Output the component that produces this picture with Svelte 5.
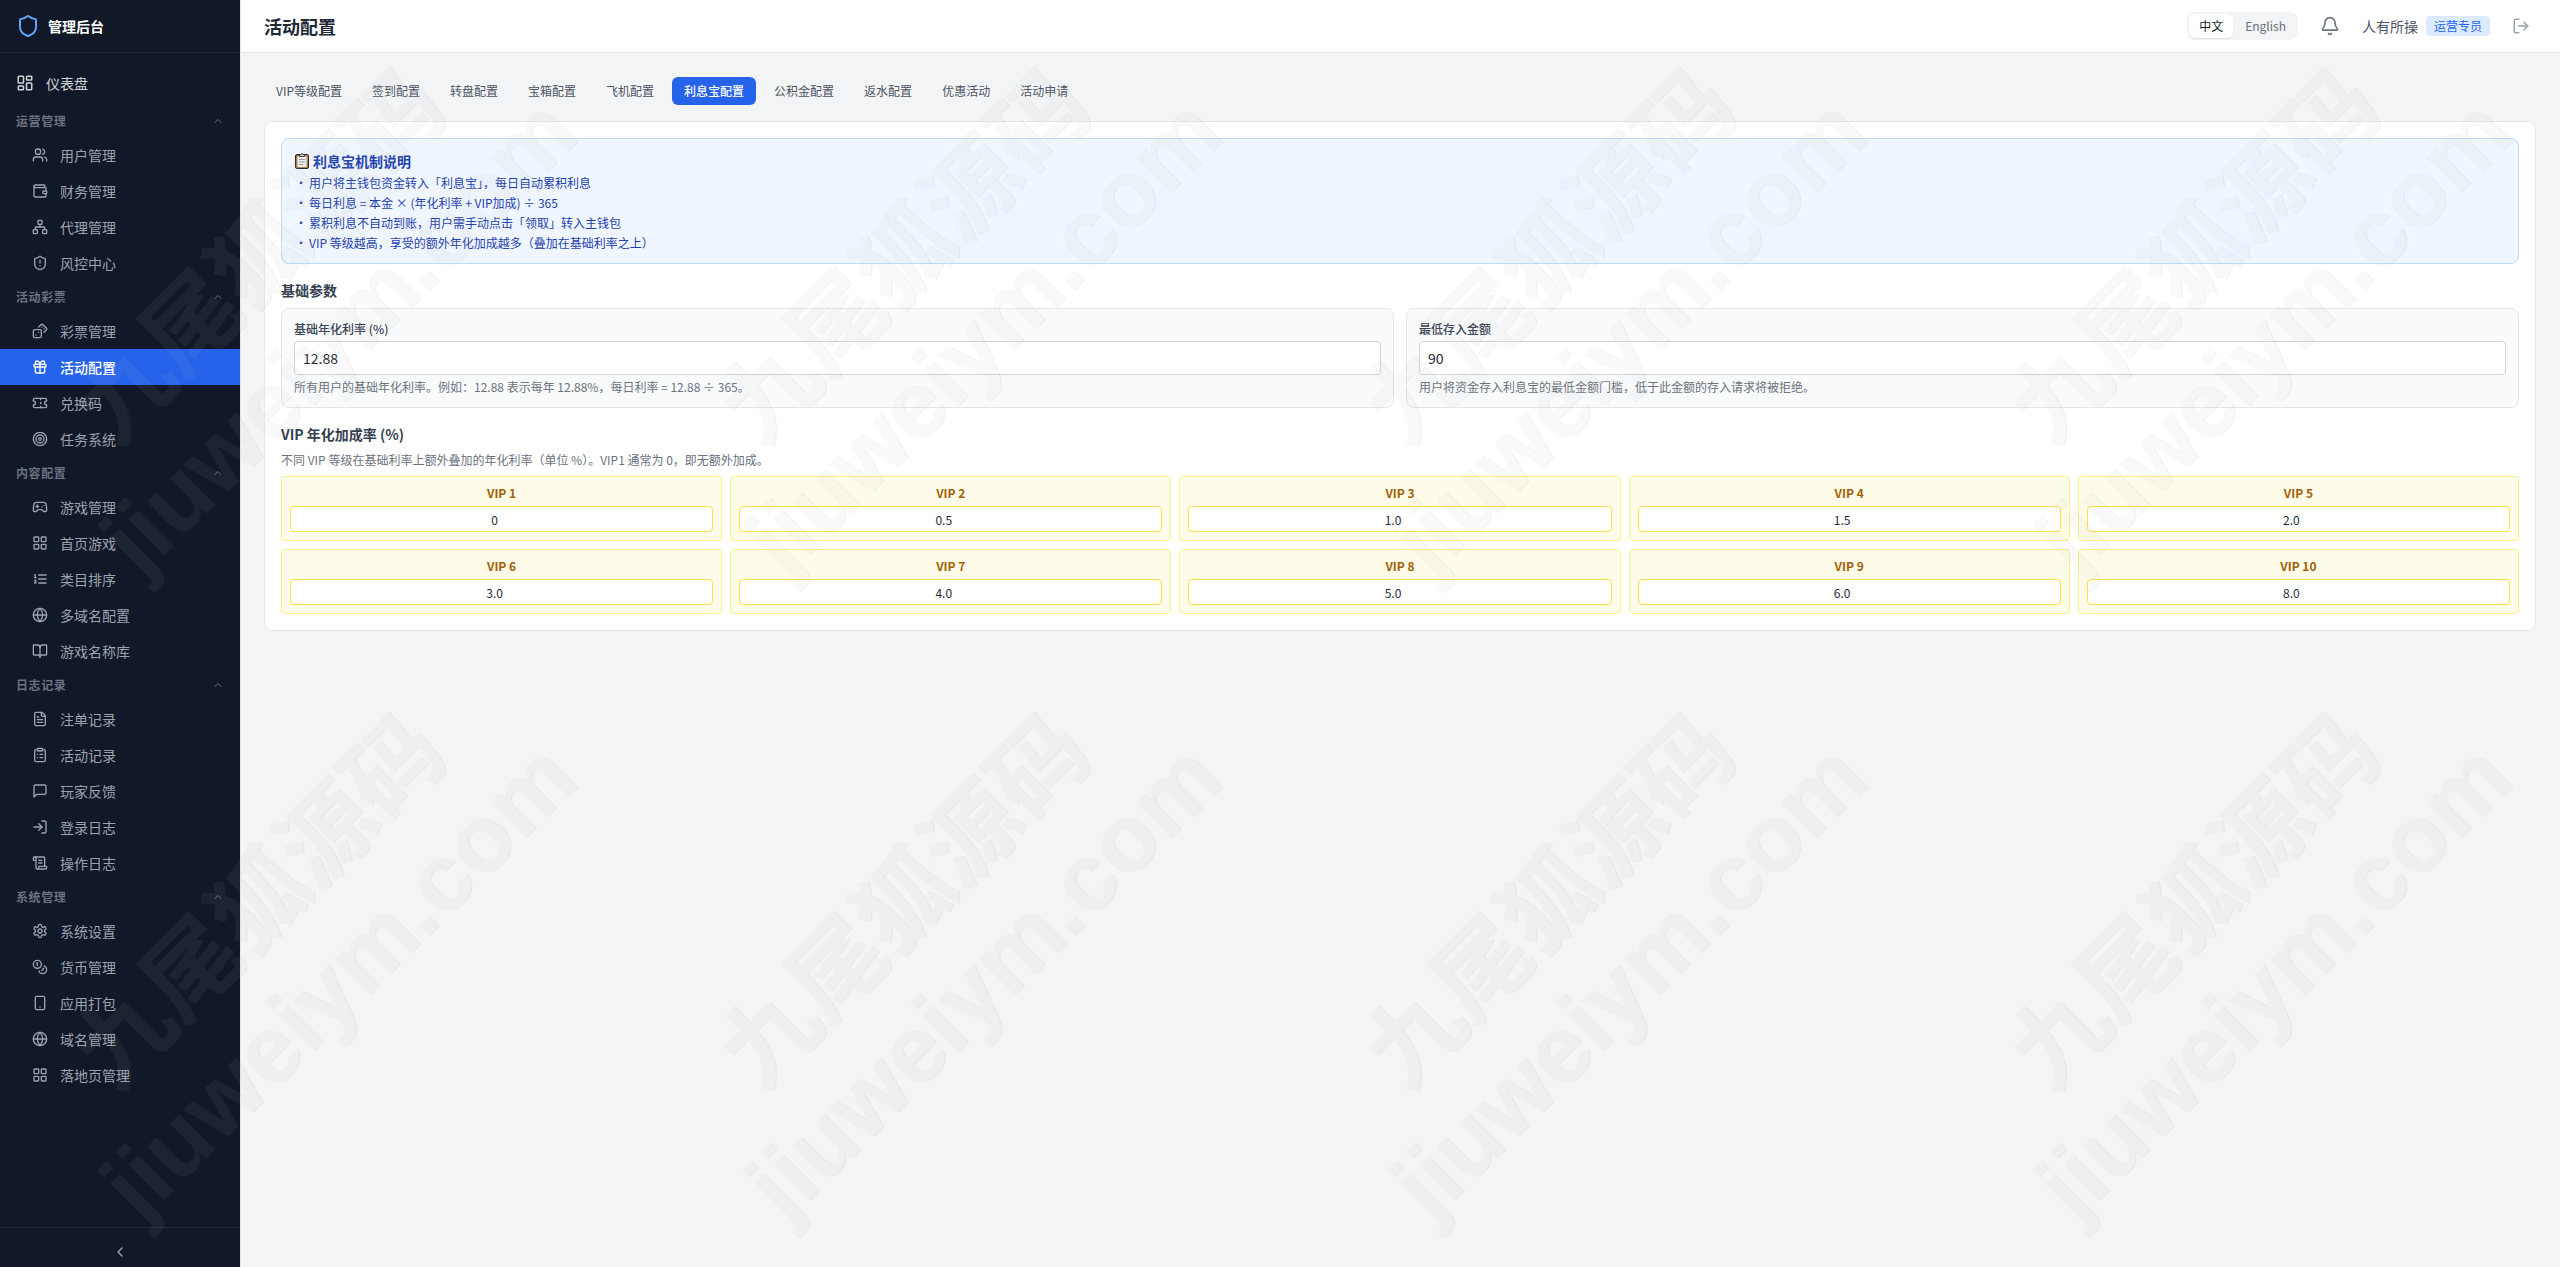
<script>
  const icons = {
    shield: '<path d="M20 13c0 5-3.5 7.5-7.66 8.95a1 1 0 0 1-.67-.01C7.5 20.5 4 18 4 13V6a1 1 0 0 1 1-1c2 0 4.5-1.2 6.24-2.72a1.17 1.17 0 0 1 1.52 0C14.51 3.81 17 5 19 5a1 1 0 0 1 1 1z"/>',
    dashboard: '<rect width="7" height="9" x="3" y="3" rx="1"/><rect width="7" height="5" x="14" y="3" rx="1"/><rect width="7" height="9" x="14" y="12" rx="1"/><rect width="7" height="5" x="3" y="16" rx="1"/>',
    users: '<path d="M16 21v-2a4 4 0 0 0-4-4H6a4 4 0 0 0-4 4v2"/><path d="M16 3.128a4 4 0 0 1 0 7.744"/><path d="M22 21v-2a4 4 0 0 0-3-3.87"/><circle cx="9" cy="7" r="4"/>',
    wallet: '<path d="M19 7V4a1 1 0 0 0-1-1H5a2 2 0 0 0 0 4h15a1 1 0 0 1 1 1v4h-3a2 2 0 0 0 0 4h3a1 1 0 0 0 1-1v-2a1 1 0 0 0-1-1"/><path d="M3 5v14a2 2 0 0 0 2 2h15a1 1 0 0 0 1-1v-4"/>',
    network: '<rect x="16" y="16" width="6" height="6" rx="1"/><rect x="2" y="16" width="6" height="6" rx="1"/><rect x="9" y="2" width="6" height="6" rx="1"/><path d="M5 16v-3a1 1 0 0 1 1-1h12a1 1 0 0 1 1 1v3"/><path d="M12 12V8"/>',
    shieldAlert: '<path d="M20 13c0 5-3.5 7.5-7.66 8.95a1 1 0 0 1-.67-.01C7.5 20.5 4 18 4 13V6a1 1 0 0 1 1-1c2 0 4.5-1.2 6.24-2.72a1.17 1.17 0 0 1 1.52 0C14.51 3.81 17 5 19 5a1 1 0 0 1 1 1z"/><path d="M12 8v4"/><path d="M12 16h.01"/>',
    dices: '<rect width="12" height="12" x="2" y="10" rx="2" ry="2"/><path d="m17.92 14 3.5-3.5a2.24 2.24 0 0 0 0-3l-5-4.92a2.24 2.24 0 0 0-3 0L10 6"/><path d="M6 18h.01"/><path d="M10 14h.01"/><path d="M15 6h.01"/><path d="M18 9h.01"/>',
    gift: '<rect x="3" y="8" width="18" height="4" rx="1"/><path d="M12 8v13"/><path d="M19 12v7a2 2 0 0 1-2 2H7a2 2 0 0 1-2-2v-7"/><path d="M7.5 8a2.5 2.5 0 0 1 0-5A4.8 8 0 0 1 12 8a4.8 8 0 0 1 4.5-5 2.5 2.5 0 0 1 0 5"/>',
    ticket: '<path d="M2 9a3 3 0 0 1 0 6v2a2 2 0 0 0 2 2h16a2 2 0 0 0 2-2v-2a3 3 0 0 1 0-6V7a2 2 0 0 0-2-2H4a2 2 0 0 0-2 2Z"/><path d="M13 5v2"/><path d="M13 17v2"/><path d="M13 11v2"/>',
    target: '<circle cx="12" cy="12" r="10"/><circle cx="12" cy="12" r="6"/><circle cx="12" cy="12" r="2"/>',
    gamepad: '<path d="M6 11h4"/><path d="M8 9v4"/><path d="M15 12h.01"/><path d="M18 10h.01"/><path d="M17.32 5H6.68a4 4 0 0 0-3.978 3.59c-.006.052-.01.101-.017.152C2.604 9.416 2 14.456 2 16a3 3 0 0 0 3 3c1 0 1.5-.5 2-1l1.414-1.414A2 2 0 0 1 9.828 16h4.344a2 2 0 0 1 1.414.586L17 18c.5.5 1 1 2 1a3 3 0 0 0 3-3c0-1.545-.604-6.584-.685-7.258-.007-.05-.011-.1-.017-.151A4 4 0 0 0 17.32 5z"/>',
    grid: '<rect width="7" height="7" x="3" y="3" rx="1"/><rect width="7" height="7" x="14" y="3" rx="1"/><rect width="7" height="7" x="14" y="14" rx="1"/><rect width="7" height="7" x="3" y="14" rx="1"/>',
    list: '<path d="M10 12h11"/><path d="M10 18h11"/><path d="M10 6h11"/><path d="M4 10h2"/><path d="M4 6h1v4"/><path d="M6 18H4c0-1 2-2 2-3s-1-1.5-2-1"/>',
    globe: '<circle cx="12" cy="12" r="10"/><path d="M12 2a14.5 14.5 0 0 0 0 20 14.5 14.5 0 0 0 0-20"/><path d="M2 12h20"/>',
    book: '<path d="M12 7v14"/><path d="M3 18a1 1 0 0 1-1-1V4a1 1 0 0 1 1-1h5a4 4 0 0 1 4 4 4 4 0 0 1 4-4h5a1 1 0 0 1 1 1v13a1 1 0 0 1-1 1h-6a3 3 0 0 0-3 3 3 3 0 0 0-3-3z"/>',
    file: '<path d="M15 2H6a2 2 0 0 0-2 2v16a2 2 0 0 0 2 2h12a2 2 0 0 0 2-2V7Z"/><path d="M14 2v4a2 2 0 0 0 2 2h4"/><path d="M10 9H8"/><path d="M16 13H8"/><path d="M16 17H8"/>',
    clipboard: '<rect width="8" height="4" x="8" y="2" rx="1" ry="1"/><path d="M16 4h2a2 2 0 0 1 2 2v14a2 2 0 0 1-2 2H6a2 2 0 0 1-2-2V6a2 2 0 0 1 2-2h2"/><path d="M12 11h4"/><path d="M12 16h4"/><path d="M8 11h.01"/><path d="M8 16h.01"/>',
    message: '<path d="M21 15a2 2 0 0 1-2 2H7l-4 4V5a2 2 0 0 1 2-2h14a2 2 0 0 1 2 2z"/>',
    login: '<path d="M15 3h4a2 2 0 0 1 2 2v14a2 2 0 0 1-2 2h-4"/><path d="m10 17 5-5-5-5"/><path d="M15 12H3"/>',
    scroll: '<path d="M15 12h-5"/><path d="M15 8h-5"/><path d="M19 17V5a2 2 0 0 0-2-2H4"/><path d="M8 21h12a2 2 0 0 0 2-2v-1a1 1 0 0 0-1-1H11a1 1 0 0 0-1 1v1a2 2 0 1 1-4 0V5a2 2 0 1 0-4 0v2a1 1 0 0 0 1 1h3"/>',
    settings: '<path d="M12.22 2h-.44a2 2 0 0 0-2 2v.18a2 2 0 0 1-1 1.73l-.43.25a2 2 0 0 1-2 0l-.15-.08a2 2 0 0 0-2.73.73l-.22.38a2 2 0 0 0 .73 2.73l.15.1a2 2 0 0 1 1 1.72v.51a2 2 0 0 1-1 1.74l-.15.09a2 2 0 0 0-.73 2.73l.22.38a2 2 0 0 0 2.73.73l.15-.08a2 2 0 0 1 2 0l.43.25a2 2 0 0 1 1 1.73V20a2 2 0 0 0 2 2h.44a2 2 0 0 0 2-2v-.18a2 2 0 0 1 1-1.73l.43-.25a2 2 0 0 1 2 0l.15.08a2 2 0 0 0 2.73-.73l.22-.39a2 2 0 0 0-.73-2.73l-.15-.08a2 2 0 0 1-1-1.74v-.5a2 2 0 0 1 1-1.74l.15-.09a2 2 0 0 0 .73-2.73l-.22-.38a2 2 0 0 0-2.73-.73l-.15.08a2 2 0 0 1-2 0l-.43-.25a2 2 0 0 1-1-1.73V4a2 2 0 0 0-2-2z"/><circle cx="12" cy="12" r="3"/>',
    coins: '<circle cx="8" cy="8" r="6"/><path d="M18.09 10.37A6 6 0 1 1 10.34 18"/><path d="M7 6h1v4"/><path d="m16.71 13.88.7.71-2.82 2.82"/>',
    phone: '<rect width="14" height="20" x="5" y="2" rx="2" ry="2"/><path d="M12 18h.01"/>',
    up: '<path d="m18 15-6-6-6 6"/>',
    left: '<path d="m15 18-6-6 6-6"/>',
    bell: '<path d="M10.268 21a2 2 0 0 0 3.464 0"/><path d="M3.262 15.326A1 1 0 0 0 4 17h16a1 1 0 0 0 .74-1.673C19.41 13.956 18 12.499 18 8A6 6 0 0 0 6 8c0 4.499-1.411 5.956-2.738 7.326"/>',
    logout: '<path d="M9 21H5a2 2 0 0 1-2-2V5a2 2 0 0 1 2-2h4"/><path d="m16 17 5-5-5-5"/><path d="M21 12H9"/>'
  };

  const groups = [
    { title: '运营管理', items: [['users', '用户管理'], ['wallet', '财务管理'], ['network', '代理管理'], ['shieldAlert', '风控中心']] },
    { title: '活动彩票', items: [['dices', '彩票管理'], ['gift', '活动配置'], ['ticket', '兑换码'], ['target', '任务系统']] },
    { title: '内容配置', items: [['gamepad', '游戏管理'], ['grid', '首页游戏'], ['list', '类目排序'], ['globe', '多域名配置'], ['book', '游戏名称库']] },
    { title: '日志记录', items: [['file', '注单记录'], ['clipboard', '活动记录'], ['message', '玩家反馈'], ['login', '登录日志'], ['scroll', '操作日志']] },
    { title: '系统管理', items: [['settings', '系统设置'], ['coins', '货币管理'], ['phone', '应用打包'], ['globe', '域名管理'], ['grid', '落地页管理']] }
  ];
  let page = $state('活动配置');
  let lang = $state('中文');

  const tabs = ['VIP等级配置', '签到配置', '转盘配置', '宝箱配置', '飞机配置', '利息宝配置', '公积金配置', '返水配置', '优惠活动', '活动申请'];
  let tab = $state('利息宝配置');

  const rules = [
    '用户将主钱包资金转入「利息宝」，每日自动累积利息',
    '每日利息 = 本金 × (年化利率 + VIP加成) ÷ 365',
    '累积利息不自动到账，用户需手动点击「领取」转入主钱包',
    'VIP 等级越高，享受的额外年化加成越多（叠加在基础利率之上）'
  ];

  let fields = $state([
    { id: 'rate', label: '基础年化利率 (%)', value: '12.88', help: '所有用户的基础年化利率。例如：12.88 表示每年 12.88%，每日利率 = 12.88 ÷ 365。' },
    { id: 'min', label: '最低存入金额', value: '90', help: '用户将资金存入利息宝的最低金额门槛，低于此金额的存入请求将被拒绝。' }
  ]);
  let vip = $state(['0', '0.5', '1.0', '1.5', '2.0', '3.0', '4.0', '5.0', '6.0', '8.0']);

  // The watermark repeats on a square grid.
  const tile = 645;
  const marks = [0, 1].flatMap((r) => [0, 1, 2, 3].map((c) => `translate(${c * tile + 55} ${r * tile + 55}) rotate(-45)`));
</script>

{#snippet icon(name, cls)}
  <svg class="icon {cls}" viewBox="0 0 24 24" aria-hidden="true">{@html icons[name]}</svg>
{/snippet}

<div class="app">
  <aside>
    <div class="brand">{@render icon('shield', 'i24')}<span>管理后台</span></div>
    <nav>
      <a class="top" href="#dashboard">{@render icon('dashboard', 'i18')}<span>仪表盘</span></a>
      {#each groups as g}
        <button class="group" type="button"><span>{g.title}</span>{@render icon('up', 'i12')}</button>
        {#each g.items as [ic, name]}
          <a class="item" class:active={page === name} href="#{name}" onclick={() => (page = name)}>
            {@render icon(ic, 'i16')}<span>{name}</span>
          </a>
        {/each}
      {/each}
    </nav>
    <button class="collapse" type="button" aria-label="收起菜单">{@render icon('left', 'i16')}</button>
  </aside>

  <div class="body">
    <header>
      <h1>活动配置</h1>
      <div class="tools">
        <div class="lang">
          {#each ['中文', 'English'] as l}
            <button type="button" class:on={lang === l} onclick={() => (lang = l)}>{l}</button>
          {/each}
        </div>
        <button class="bell" type="button" aria-label="通知">{@render icon('bell', 'i20')}</button>
        <div class="user"><span>人有所操</span><span class="role">运营专员</span></div>
        <button class="out" type="button" aria-label="退出">{@render icon('logout', 'i18')}</button>
      </div>
    </header>

    <main>
      <div class="tabs">
        {#each tabs as t}
          <button type="button" class:on={tab === t} onclick={() => (tab = t)}>{t}</button>
        {/each}
      </div>

      <section class="card">
        <div class="notice">
          <h2>
            <svg class="board" viewBox="0 0 14 16" aria-hidden="true">
              <rect x="0.5" y="1.5" width="13" height="14" rx="1.5" fill="#a87c4f" stroke="#2b2622" />
              <path d="M2.5 3.5h9v10.5h-9z" fill="#f4f4f4" />
              <path d="M4.5 3.5v-2h1.5a1 1 0 0 1 2 0h1.5v2z" fill="#c8c8c8" stroke="#2b2622" stroke-width="0.8" />
              <path d="M4 6.5h6M4 9h6M4 11.5h4" stroke="#999" />
            </svg>
            <span>利息宝机制说明</span>
          </h2>
          <ul>
            {#each rules as r}<li>{r}</li>{/each}
          </ul>
        </div>

        <h3>基础参数</h3>
        <div class="fields">
          {#each fields as f}
            <div class="field">
              <label for={f.id}>{f.label}</label>
              <input id={f.id} type="text" bind:value={f.value} />
              <p>{f.help}</p>
            </div>
          {/each}
        </div>

        <h3>VIP 年化加成率 (%)</h3>
        <p class="hint">不同 VIP 等级在基础利率上额外叠加的年化利率（单位 %）。VIP1 通常为 0，即无额外加成。</p>
        <div class="vips">
          {#each vip as _, i}
            <div class="vip">
              <label for="vip{i}">VIP {i + 1}</label>
              <input id="vip{i}" type="text" bind:value={vip[i]} />
            </div>
          {/each}
        </div>
      </section>
    </main>
  </div>

  <svg class="watermark" aria-hidden="true">
    {#each marks as t}
      <g transform={t}>
        <text class="cn" x="2" y="320">九尾狐源码</text>
        <text x="2" y="431">jiuweiym.com</text>
      </g>
    {/each}
  </svg>
</div>

<style>
  :global(body) {
    background: #f3f4f6;
  }
  .app {
    position: relative;
    display: flex;
    min-height: 100vh;
    overflow: hidden;
    font-family: 'Noto Sans CJK SC', sans-serif;
    font-size: 14px;
    line-height: 20px;
    color: #1f2937;
  }
  .app :global(*) {
    box-sizing: border-box;
  }
  h1, h2, h3, p, ul {
    margin: 0;
    padding: 0;
  }
  button, input {
    font: inherit;
    color: inherit;
  }
  button {
    border: 0;
    padding: 0;
    background: none;
    cursor: pointer;
  }
  a {
    color: inherit;
    text-decoration: none;
  }
  .icon {
    flex: none;
    display: block;
    fill: none;
    stroke: currentColor;
    stroke-width: 2;
    stroke-linecap: round;
    stroke-linejoin: round;
  }
  .i12 { width: 12px; height: 12px; }
  .i16 { width: 16px; height: 16px; }
  .i18 { width: 18px; height: 18px; }
  .i20 { width: 20px; height: 20px; }
  .i24 { width: 24px; height: 24px; }

  aside {
    flex: none;
    display: flex;
    flex-direction: column;
    width: 240px;
    background: #111827;
    color: #9ca3af;
  }
  .brand {
    display: flex;
    align-items: center;
    gap: 8px;
    height: 53px;
    padding: 0 16px;
    border-bottom: 1px solid #1f2937;
    color: #fff;
    font-weight: 700;
  }
  .brand .icon {
    color: #60a5fa;
  }
  nav {
    flex: 1;
    padding: 12px 0;
  }
  .top {
    display: flex;
    align-items: center;
    gap: 12px;
    height: 36px;
    margin-bottom: 4px;
    padding: 0 16px;
    color: #d1d5db;
  }
  .group {
    display: flex;
    align-items: center;
    justify-content: space-between;
    width: 100%;
    height: 32px;
    padding: 4px 16px;
    color: #6b7280;
    font-size: 12px;
    font-weight: 600;
    letter-spacing: 0.05em;
  }
  .item {
    display: flex;
    align-items: center;
    gap: 12px;
    height: 36px;
    padding: 0 32px;
  }
  .item.active {
    background: #2563eb;
    color: #fff;
    font-weight: 500;
  }
  .collapse {
    display: flex;
    align-items: center;
    justify-content: center;
    height: 40px;
    padding-top: 8px;
    border-top: 1px solid #1f2937;
  }

  .body {
    flex: 1;
    min-width: 0;
    border-left: 1px solid #e5e7eb;
  }
  header {
    display: flex;
    align-items: center;
    justify-content: space-between;
    height: 53px;
    padding: 0 30px 0 23px;
    background: #fff;
    border-bottom: 1px solid #e5e7eb;
  }
  h1 {
    font-size: 18px;
    line-height: 28px;
    font-weight: 600;
  }
  .tools {
    display: flex;
    align-items: center;
    gap: 22px;
  }
  .lang {
    display: flex;
    gap: 2px;
    padding: 2px;
    border-radius: 8px;
    background: #f3f4f6;
    font-size: 12px;
    line-height: 16px;
    color: #6b7280;
  }
  .lang button {
    padding: 4px 10px;
    border-radius: 6px;
  }
  .lang .on {
    background: #fff;
    color: #111827;
    box-shadow: 0 1px 2px rgba(0, 0, 0, 0.08);
  }
  .bell { color: #6b7280; }
  .out { color: #9ca3af; }
  .user {
    display: flex;
    align-items: center;
    gap: 8px;
    color: #4b5563;
  }
  .role {
    padding: 2px 8px;
    border-radius: 4px;
    background: #dbeafe;
    color: #2563eb;
    font-size: 12px;
    line-height: 16px;
  }

  main {
    padding: 24px 24px 24px 23px;
  }
  .tabs {
    display: flex;
    gap: 6px;
    margin-bottom: 16px;
    color: #4b5563;
    font-size: 12px;
    line-height: 16px;
  }
  .tabs button {
    padding: 6px 12px;
    border-radius: 6px;
  }
  .tabs .on {
    background: #2563eb;
    color: #fff;
    font-weight: 500;
  }
  .card {
    padding: 16px;
    border: 1px solid #e5e7eb;
    border-radius: 8px;
    background: #fff;
  }
  .notice {
    margin-bottom: 16px;
    padding: 12px 12px 10px;
    border: 1px solid #bfdbfe;
    border-radius: 8px;
    background: #eff6ff;
    color: #1e40af;
  }
  h2 {
    display: flex;
    align-items: center;
    gap: 4px;
    margin-bottom: 2px;
    padding-left: 1px;
    font-size: 14px;
    line-height: 20px;
    font-weight: 700;
  }
  .board {
    width: 14px;
    height: 16px;
  }
  ul {
    list-style: none;
    font-size: 12px;
    line-height: 20px;
  }
  li::before {
    content: '•';
    display: inline-block;
    width: 14px;
    padding-left: 1px;
  }
  h3 {
    margin-bottom: 8px;
    color: #374151;
    font-size: 14px;
    line-height: 20px;
    font-weight: 700;
  }
  .fields {
    display: grid;
    grid-template-columns: 1fr 1fr;
    gap: 12px;
    margin-bottom: 16px;
  }
  .field {
    display: flex;
    flex-direction: column;
    gap: 4px;
    padding: 12px;
    border: 1px solid #e5e7eb;
    border-radius: 8px;
    background: #f9fafb;
    font-size: 12px;
    line-height: 16px;
  }
  .field label {
    color: #374151;
    font-weight: 500;
  }
  .field input {
    width: 100%;
    height: 34px;
    padding: 0 8px;
    border: 1px solid #d1d5db;
    border-radius: 4px;
    background: #fff;
    color: #1f2937;
    font-size: 14px;
  }
  .field p, .hint {
    color: #6b7280;
    font-size: 12px;
    line-height: 16px;
  }
  .hint {
    margin-bottom: 8px;
  }
  .vips {
    display: grid;
    grid-template-columns: repeat(5, 1fr);
    gap: 8px;
  }
  .vip {
    display: flex;
    flex-direction: column;
    gap: 5px;
    padding: 8px;
    border: 1px solid #fef08a;
    border-radius: 4px;
    background: #fefce8;
    font-size: 12px;
    line-height: 16px;
    text-align: center;
  }
  .vip label {
    color: #a16207;
    font-weight: 700;
  }
  .vip input {
    width: 100%;
    height: 26px;
    padding: 0 22px 0 8px;
    border: 1px solid #fde047;
    border-radius: 4px;
    background: #fff;
    color: #1f2937;
    text-align: center;
  }

  .watermark {
    position: absolute;
    inset: 0;
    width: 100%;
    height: 100%;
    pointer-events: none;
    opacity: 0.07;
  }
  .watermark text {
    fill: #bbb;
    font-family: 'Liberation Sans', sans-serif;
    font-size: 95px;
    font-weight: 700;
    text-anchor: middle;
    text-shadow: 1px 1px 0 #555;
  }
  .watermark .cn {
    font-family: 'Noto Sans CJK SC', sans-serif;
  }
</style>
